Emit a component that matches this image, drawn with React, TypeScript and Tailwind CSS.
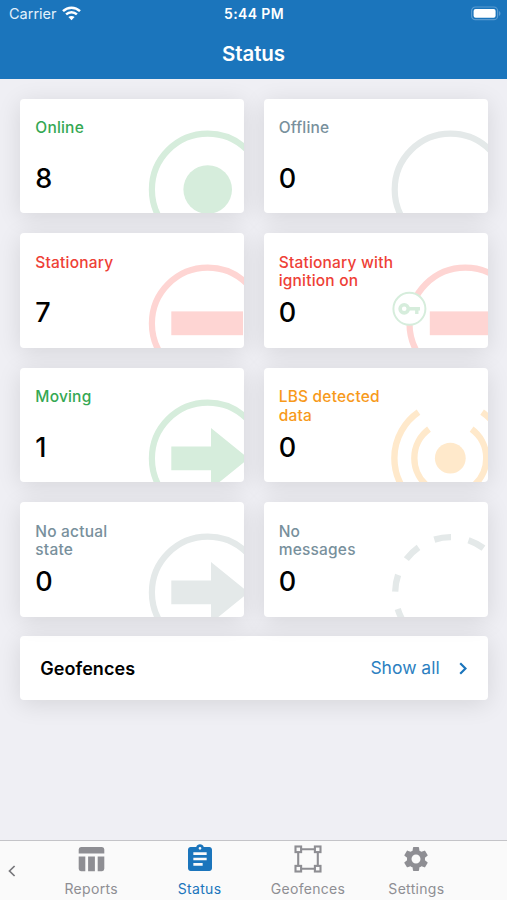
import type { ReactNode } from "react";
import { MdAssignment, MdSettings } from "react-icons/md";

const GREEN = "#d6eddc";
const GRAY = "#e4e9e9";
const RED = "#fed5d3";
const ORANGE = "#ffe9cb";

function Ring({ color, cx = 187.7 }: { color: string; cx?: number }) {
  return <circle cx={cx} cy="90.5" r="55.8" fill="none" stroke={color} strokeWidth="6.2" />;
}

function Arrow({ color }: { color: string }) {
  return <path d="M151.3 78.4H191V60L228.5 90.5L191 121V102.2H151.3Z" fill={color} />;
}

interface CardProps {
  title: string[];
  value: string;
  tone: string;
  children: ReactNode;
}

function Card({ title, value, tone, children }: CardProps) {
  return (
    <section className="relative h-[114.8px] rounded-[4px] bg-white shadow-[0_4px_24px_rgba(0,0,0,0.11)]">
      <svg className="absolute inset-0 h-full w-full rounded-[4px]" aria-hidden="true">
        {children}
      </svg>
      <div className="relative flex h-full flex-col px-[15px] pt-[20.6px]">
        <h2 className={`h-[40.4px] text-[15.5px] leading-[18.8px] font-medium tracking-[0.2px] ${tone}`}>
          {title.map((line) => (
            <span key={line} className="block whitespace-nowrap">
              {line}
            </span>
          ))}
        </h2>
        <p className="text-[27px] leading-[38px] font-medium text-black">{value}</p>
      </div>
    </section>
  );
}

function StatusBar() {
  return (
    <div className="grid h-[27px] grid-cols-3 items-center pr-[6px] pl-[9px] text-[14.5px]">
      <div className="flex items-center gap-[5px]">
        <span className="text-[#e3f1fb]">Carrier</span>
        <svg width="19" height="15" viewBox="0 0 19 15" aria-hidden="true">
          <g fill="none" stroke="#fff" strokeWidth="2.5">
            <path d="M1 5.2C5.8 .6 13.2 .6 18 5.2" />
            <path d="M4.1 8.3C7.2 5.4 11.8 5.4 14.9 8.3" />
          </g>
          <path d="M9.5 14.2L6.4 11C8.2 9.5 10.8 9.5 12.6 11Z" fill="#fff" />
        </svg>
      </div>
      <span className="-ml-[2px] text-center text-[14px] font-semibold tracking-[0.35px] whitespace-nowrap">5:44 PM</span>
      <svg className="justify-self-end" width="31" height="15" viewBox="0 0 31 15" aria-hidden="true">
        <rect x="1.6" y="1" width="26" height="12.7" rx="3.8" fill="none" stroke="#5a9bd0" strokeWidth="1.2" />
        <rect x="3.6" y="3" width="22" height="8.8" rx="2" fill="#fff" />
        <path d="M29 5V10C31 9 31 6 29 5Z" fill="#5a9bd0" />
      </svg>
    </div>
  );
}

function TableIcon() {
  return (
    <svg width="27" height="27" viewBox="0 0 27 27" fill="currentColor" aria-hidden="true">
      <path d="M3 1H24A2.4 2.4 0 0 1 26.3 3.4V7.6H.7V3.4A2.4 2.4 0 0 1 3 1Z" />
      <path d="M.7 10.4H7.3V25.2H3A2.4 2.4 0 0 1 .7 22.8ZM10.1 10.4H16.9V25.2H10.1ZM19.7 10.4H26.3V22.8A2.4 2.4 0 0 1 24 25.2H19.7Z" />
    </svg>
  );
}

function FenceIcon() {
  return (
    <svg width="28" height="28" viewBox="0 0 28 28" fill="none" stroke="currentColor" strokeWidth="2.1" aria-hidden="true">
      <path d="M7 4.2H21M7 23.8H21M4.2 7V21M23.8 7V21" />
      <rect x="1.5" y="1.5" width="5.6" height="5.6" />
      <rect x="20.9" y="1.5" width="5.6" height="5.6" />
      <rect x="1.5" y="20.9" width="5.6" height="5.6" />
      <rect x="20.9" y="20.9" width="5.6" height="5.6" />
    </svg>
  );
}

function Tab({ label, icon, tone }: { label: string; icon: ReactNode; tone: string }) {
  return (
    <a className={`flex w-[108.4px] flex-col items-center ${tone}`}>
      <span className="flex h-[36px] items-center justify-center">{icon}</span>
      <span className="mt-px text-[14px] leading-[21px] tracking-[0.3px]">{label}</span>
    </a>
  );
}

export default function App() {
  return (
    <div className="flex h-[900px] w-[507px] flex-col overflow-hidden bg-[#efeff4] font-[Inter,'Liberation_Sans',sans-serif]">
      <header className="h-[79px] shrink-0 bg-[#1b75bc] text-white">
        <StatusBar />
        <h1 className="text-center text-[20.5px] leading-[53px] font-semibold tracking-[-0.1px]">Status</h1>
      </header>

      <main className="flex grow flex-col px-[20.3px] pt-[19.6px]">
        <div className="grid grid-cols-[224px_224px] gap-x-[19.4px] gap-y-[19.7px]">
          <Card title={["Online"]} value="8" tone="text-[#35a853]">
            <Ring color={GREEN} />
            <circle cx="187.7" cy="90.5" r="24.3" fill={GREEN} />
          </Card>
          <Card title={["Offline"]} value="0" tone="text-[#78909c]">
            <Ring color={GRAY} cx={186.5} />
          </Card>
          <Card title={["Stationary"]} value="7" tone="text-[#ee4036]">
            <Ring color={RED} />
            <rect x="151.3" y="78.4" width="71.7" height="23.8" fill={RED} />
          </Card>
          <Card title={["Stationary with", "ignition on"]} value="0" tone="text-[#ee4036]">
            <Ring color={RED} cx={201.3} />
            <rect x="165.8" y="78.4" width="60" height="23.8" fill={RED} />
            <circle cx="145.4" cy="75.8" r="16" fill="#fff" stroke={GREEN} strokeWidth="2" />
            <g fill="none" stroke={GREEN}>
              <circle cx="140.2" cy="75.8" r="4.1" strokeWidth="3.6" />
              <path d="M144.6 75.8H156M152.8 75.8V81" strokeWidth="3.4" />
            </g>
          </Card>
          <Card title={["Moving"]} value="1" tone="text-[#35a853]">
            <Ring color={GREEN} />
            <Arrow color={GREEN} />
          </Card>
          <Card title={["LBS detected", "data"]} value="0" tone="text-[#f79a1b]">
            <g transform="translate(186.3 90.2)" fill="none" stroke={ORANGE} strokeWidth="6.4">
              <circle r="15.4" fill={ORANGE} stroke="none" />
              <path d="M-21.3 -29A36 36 0 0 0 -21.3 29M21.3 -29A36 36 0 0 1 21.3 29" />
              <path d="M-31.8 -46A55.9 55.9 0 0 0 -31.8 46M31.8 -46A55.9 55.9 0 0 1 31.8 46" />
            </g>
          </Card>
          <Card title={["No actual", "state"]} value="0" tone="text-[#78909c]">
            <Ring color={GRAY} />
            <Arrow color={GRAY} />
          </Card>
          <Card title={["No", "messages"]} value="0" tone="text-[#78909c]">
            <circle
              cx="186.5"
              cy="90.5"
              r="55.3"
              fill="none"
              stroke={GRAY}
              strokeWidth="6.3"
              pathLength="360"
              strokeDasharray="17.6 18.4"
              transform="rotate(-107 186.5 90.5)"
            />
          </Card>
        </div>

        <section className="mt-[19.6px] flex h-[63.5px] w-[467.4px] items-center rounded-[4px] bg-white px-[20px] shadow-[0_4px_24px_rgba(0,0,0,0.11)]">
          <h2 className="grow text-[18px] font-semibold tracking-[0.05px] text-black">Geofences</h2>
          <a className="flex items-center text-[17.5px] text-[#2c7fc1]">
            Show all
            <svg className="mr-px ml-[19px]" width="8" height="13" viewBox="0 0 8 13" fill="none" aria-hidden="true">
              <path d="M1.2 1.2L6.5 6.5L1.2 11.8" stroke="#1b75bc" strokeWidth="2.2" />
            </svg>
          </a>
        </section>
      </main>

      <nav className="flex h-[60px] shrink-0 border-t border-[#c4c4c8] bg-[#fafafa]">
        <div className="flex w-[37px] items-center pl-[8px]">
          <svg width="8" height="12" viewBox="0 0 8 12" fill="none" aria-hidden="true">
            <path d="M6.6 1L1.5 6L6.6 11" stroke="#77777b" strokeWidth="1.7" />
          </svg>
        </div>
        <Tab label="Reports" icon={<TableIcon />} tone="text-[#8e8e93]" />
        <Tab label="Status" icon={<MdAssignment size={32} />} tone="text-[#1b75bc]" />
        <Tab label="Geofences" icon={<FenceIcon />} tone="text-[#8e8e93]" />
        <Tab label="Settings" icon={<MdSettings size={30} />} tone="text-[#8e8e93]" />
      </nav>
    </div>
  );
}
